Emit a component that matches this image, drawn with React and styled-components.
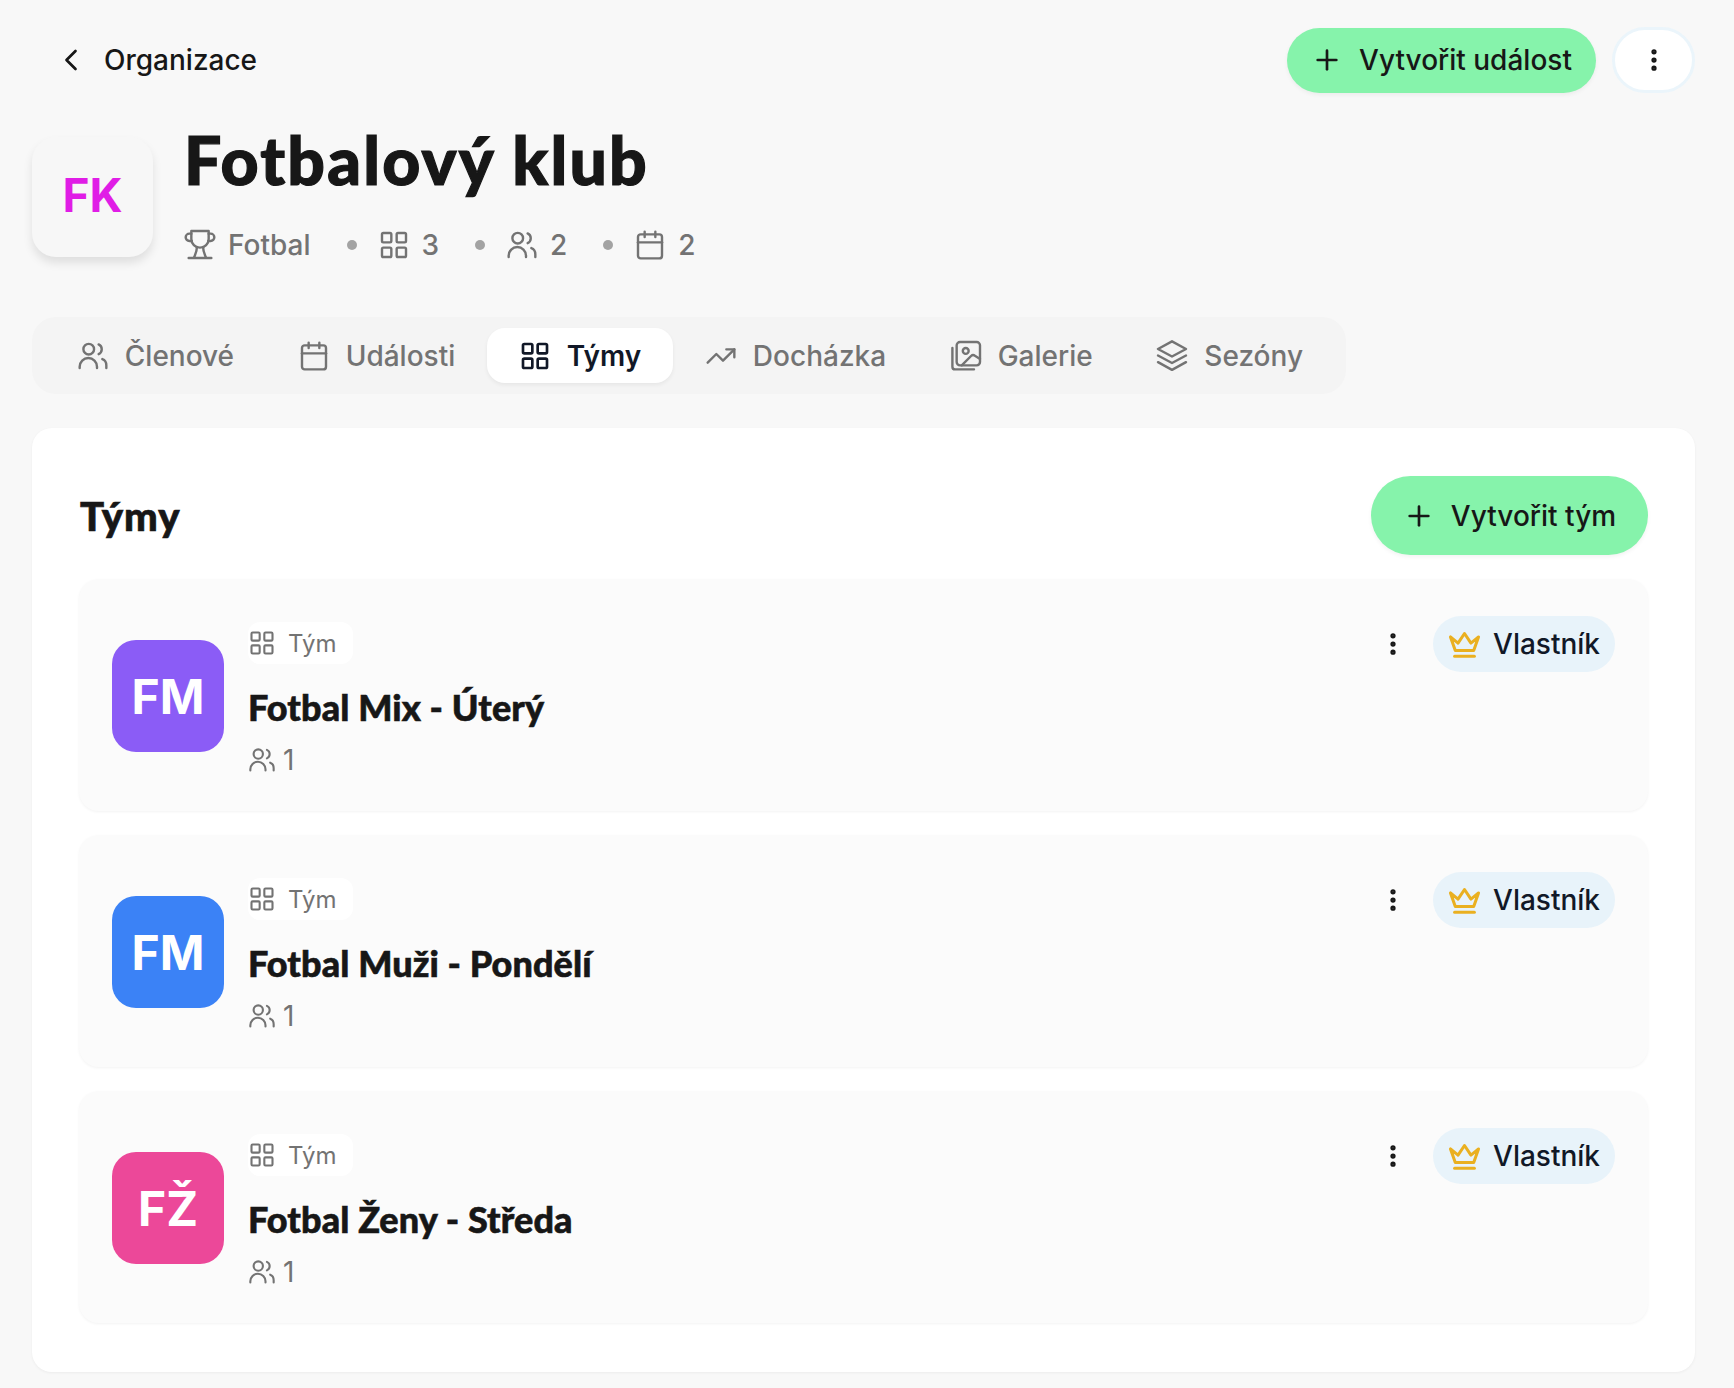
import React from "react";
import styled, { createGlobalStyle } from "styled-components";
import {
  ChevronLeft,
  Plus,
  EllipsisVertical,
  LayoutGrid,
  Calendar,
  TrendingUp,
} from "lucide-react";

const GlobalStyle = createGlobalStyle`
  * { box-sizing: border-box; }
  body {
    margin: 0;
    background: #f8f8f8;
    color: #171717;
    font-family: Inter, "Liberation Sans", sans-serif;
  }
`;

const displayFont = `Lato, "Liberation Sans", sans-serif`;

// icons lucide doesn't draw the same way as the reference
const Svg = ({ size = 32, strokeWidth = 1.8, color = "currentColor", children }) => (
  <svg
    width={size}
    height={size}
    viewBox="0 0 24 24"
    fill="none"
    stroke={color}
    strokeWidth={strokeWidth}
    strokeLinecap="round"
    strokeLinejoin="round"
  >
    {children}
  </svg>
);

const PeopleIcon = (props) => (
  <Svg {...props}>
    <circle cx="8.8" cy="6.9" r="4" />
    <path d="M16.2 3.3a4 4 0 0 1 0 7.3" />
    <path d="M2 21v-1a6.5 6.5 0 0 1 13 0v1" />
    <path d="M19 14.3c2 .7 3 2.7 3 4.7v2" />
  </Svg>
);

const GalleryIcon = (props) => (
  <Svg {...props}>
    <rect x="5" y="1.5" width="17.5" height="17.5" rx="2.5" />
    <path d="M1.8 6v14a2 2 0 0 0 2 2H18" />
    <circle cx="11.8" cy="8.2" r="2.2" />
    <path d="M8.8 19l7-7c.8-.8 2-.9 2.9-.2l3.8 2.4" />
  </Svg>
);

const StackIcon = (props) => (
  <Svg {...props}>
    <path d="M12 1l10.5 5.7L12 12.4 1.5 6.7z" />
    <path d="M1.5 11.6L12 17.3l10.5-5.7" />
    <path d="M1.5 16.6L12 22.4l10.5-5.8" />
  </Svg>
);

const CupIcon = (props) => (
  <Svg {...props}>
    <path d="M5.5 1.5h13v6a6.5 6.5 0 0 1-13 0z" />
    <path d="M5.5 3.5H4a2.7 2.7 0 0 0 0 5.5h1.8" />
    <path d="M18.5 3.5H20a2.7 2.7 0 0 1 0 5.5h-1.8" />
    <path d="M9.7 13.5c0 3-1 5-2.2 8" />
    <path d="M14.3 13.5c0 3 1 5 2.2 8" />
    <path d="M3.5 21.7h17" />
  </Svg>
);

const OwnerCrown = (props) => (
  <Svg {...props}>
    <path d="M1.8 6.5l3.5 9.8h13.4l3.5-9.8-5.5 4.5L12 4 7.3 11z" />
    <path d="M4.8 20.6h14.4" />
  </Svg>
);

const Page = styled.div`
  padding: 27px 39px 16px 32px;
`;

const TopBar = styled.header`
  display: flex;
  justify-content: space-between;
  align-items: center;
  height: 66px;
`;

const BackLink = styled.a`
  display: flex;
  align-items: center;
  gap: 15px;
  margin-left: 21px;
  font-size: 28px;
  font-weight: 500;
  color: #171717;
`;

const TopActions = styled.div`
  display: flex;
  align-items: center;
  gap: 16px;
`;

const GreenButton = styled.button`
  display: flex;
  align-items: center;
  justify-content: center;
  gap: 16px;
  width: ${({ $width }) => $width}px;
  height: ${({ $height }) => $height}px;
  border: 0;
  border-radius: 999px;
  background: #86f3ab;
  box-shadow: 0 2px 4px rgba(0, 0, 0, 0.05);
  color: #171717;
  font-family: inherit;
  font-size: 28px;
  font-weight: 500;
`;

const MoreButton = styled.button`
  display: flex;
  align-items: center;
  justify-content: center;
  width: 83px;
  height: 66px;
  border: 3px solid #ebf5fb;
  border-radius: 999px;
  background: #fff;
  color: #171717;
`;

const ClubHeader = styled.section`
  display: flex;
  gap: 31px;
  margin-top: 44px;
  height: 128px;
`;

const ClubLogo = styled.div`
  display: flex;
  align-items: center;
  justify-content: center;
  flex: none;
  width: 121px;
  height: 120px;
  padding-bottom: 4px;
  border-radius: 24px;
  background: #f7f7f7;
  box-shadow: 0 6px 10px rgba(0, 0, 0, 0.1);
  color: #e01de6;
  font-size: 46px;
  font-weight: 700;
`;

const ClubInfo = styled.div`
  display: flex;
  flex-direction: column;
`;

const ClubTitle = styled.h1`
  margin: -18px 0 0;
  font-family: ${displayFont};
  font-size: 66px;
  font-weight: 900;
  line-height: 82px;
  letter-spacing: 2.2px;
  -webkit-text-stroke: 1.2px #171717;
  color: #171717;
`;

const MetaRow = styled.div`
  display: flex;
  align-items: center;
  margin-top: 27px;
  color: #737373;
  font-size: 28px;
  font-weight: 500;
`;

const MetaItem = styled.span`
  display: flex;
  align-items: center;
  gap: 12px;
`;

const MetaDot = styled.span`
  width: 10px;
  height: 10px;
  margin: 0 21px 0 36px;
  border-radius: 50%;
  background: #a3a3a3;
`;

const TabBar = styled.nav`
  display: inline-flex;
  margin-top: 52px;
  padding: 11px 11px 11px 13px;
  height: 77px;
  border-radius: 24px;
  background: #f4f4f4;
`;

const Tab = styled.a`
  display: flex;
  align-items: center;
  gap: 16px;
  padding: 0 31.8px;
  border-radius: 18px;
  font-size: 28px;
  font-weight: ${({ $active }) => ($active ? 600 : 500)};
  color: ${({ $active }) => ($active ? "#111827" : "#737373")};
  background: ${({ $active }) => ($active ? "#fff" : "transparent")};
  box-shadow: ${({ $active }) => ($active ? "0 2px 4px rgba(0, 0, 0, 0.06)" : "none")};
`;

const Panel = styled.main`
  margin-top: 34px;
  padding: 48px 47px 49px 47px;
  border-radius: 20px;
  background: #fff;
  box-shadow: 0 1px 3px rgba(0, 0, 0, 0.05);
`;

const PanelHead = styled.div`
  display: flex;
  justify-content: space-between;
  align-items: center;
  margin-bottom: 24px;
`;

const PanelTitle = styled.h2`
  margin: 0 0 0 1px;
  font-family: ${displayFont};
  font-size: 40px;
  font-weight: 900;
  letter-spacing: 1px;
  -webkit-text-stroke: 0.7px #171717;
  color: #171717;
`;

const TeamList = styled.div`
  display: flex;
  flex-direction: column;
  gap: 24px;
`;

const TeamCard = styled.article`
  display: flex;
  justify-content: space-between;
  height: 232px;
  padding: 37px 33px 0;
  border-radius: 20px;
  background: #fbfbfb;
  box-shadow: 0 1px 3px rgba(0, 0, 0, 0.05);
`;

const TeamMain = styled.div`
  display: flex;
  gap: 24px;
`;

const TeamAvatar = styled.div`
  display: flex;
  align-items: center;
  justify-content: center;
  flex: none;
  width: 112px;
  height: 112px;
  margin-top: 24px;
  border-radius: 24px;
  background: ${({ $color }) => $color};
  color: #fff;
  font-size: 48px;
  font-weight: 700;
`;

const TeamText = styled.div`
  display: flex;
  flex-direction: column;
  margin-top: 6px;
`;

const TypeBadge = styled.span`
  display: flex;
  align-items: center;
  gap: 12px;
  align-self: flex-start;
  height: 42px;
  padding: 0 16px 0 0;
  border-radius: 12px;
  background: #fff;
  color: #737373;
  font-size: 24px;
`;

const TeamName = styled.h3`
  margin: 21px 0 0;
  font-family: ${displayFont};
  font-size: 36px;
  font-weight: 900;
  line-height: 44px;
  letter-spacing: 0.1px;
  -webkit-text-stroke: 0.6px #171717;
  color: #171717;
`;

const MemberCount = styled.div`
  display: flex;
  align-items: center;
  gap: 7px;
  margin-top: 14px;
  color: #737373;
  font-size: 28px;
`;

const TeamActions = styled.div`
  display: flex;
  align-items: flex-start;
  gap: 26px;
`;

const DotsWrap = styled.span`
  display: flex;
  align-items: center;
  height: 56px;
  color: #171717;
`;

const RolePill = styled.span`
  display: flex;
  align-items: center;
  gap: 12px;
  height: 56px;
  padding: 0 15px;
  border-radius: 999px;
  background: #e8f3fa;
  color: #111827;
  font-size: 28px;
  font-weight: 500;
`;

const tabs = [
  { label: "Členové", Icon: PeopleIcon },
  { label: "Události", Icon: Calendar },
  { label: "Týmy", Icon: LayoutGrid, active: true },
  { label: "Docházka", Icon: TrendingUp },
  { label: "Galerie", Icon: GalleryIcon },
  { label: "Sezóny", Icon: StackIcon },
];

const teams = [
  { initials: "FM", name: "Fotbal Mix - Úterý", color: "#8b5cf6" },
  { initials: "FM", name: "Fotbal Muži - Pondělí", color: "#3b82f6" },
  { initials: "FŽ", name: "Fotbal Ženy - Středa", color: "#ec4899" },
];

const App = () => {
  return (
    <Page>
      <GlobalStyle />
      <TopBar>
        <BackLink>
          <ChevronLeft size={36} strokeWidth={1.8} />
          Organizace
        </BackLink>
        <TopActions>
          <GreenButton $width={309} $height={65}>
            <Plus size={32} strokeWidth={2} />
            Vytvořit událost
          </GreenButton>
          <MoreButton>
            <EllipsisVertical size={28} strokeWidth={2.5} />
          </MoreButton>
        </TopActions>
      </TopBar>

      <ClubHeader>
        <ClubLogo>FK</ClubLogo>
        <ClubInfo>
          <ClubTitle>Fotbalový klub</ClubTitle>
          <MetaRow>
            <MetaItem>
              <CupIcon size={32} />
              Fotbal
            </MetaItem>
            <MetaDot />
            <MetaItem>
              <LayoutGrid size={32} strokeWidth={1.8} />3
            </MetaItem>
            <MetaDot />
            <MetaItem>
              <PeopleIcon size={32} />2
            </MetaItem>
            <MetaDot />
            <MetaItem>
              <Calendar size={32} strokeWidth={1.8} />2
            </MetaItem>
          </MetaRow>
        </ClubInfo>
      </ClubHeader>

      <TabBar>
        {tabs.map(({ label, Icon, active }) => (
          <Tab key={label} $active={active}>
            <Icon size={32} strokeWidth={active ? 2 : 1.8} />
            {label}
          </Tab>
        ))}
      </TabBar>

      <Panel>
        <PanelHead>
          <PanelTitle>Týmy</PanelTitle>
          <GreenButton $width={277} $height={79}>
            <Plus size={32} strokeWidth={2} />
            Vytvořit tým
          </GreenButton>
        </PanelHead>
        <TeamList>
          {teams.map((team) => (
            <TeamCard key={team.name}>
              <TeamMain>
                <TeamAvatar $color={team.color}>{team.initials}</TeamAvatar>
                <TeamText>
                  <TypeBadge>
                    <LayoutGrid size={28} strokeWidth={1.8} />
                    Tým
                  </TypeBadge>
                  <TeamName>{team.name}</TeamName>
                  <MemberCount>
                    <PeopleIcon size={28} />1
                  </MemberCount>
                </TeamText>
              </TeamMain>
              <TeamActions>
                <DotsWrap>
                  <EllipsisVertical size={28} strokeWidth={2.5} />
                </DotsWrap>
                <RolePill>
                  <OwnerCrown size={33} strokeWidth={2.2} color="#eab020" />
                  Vlastník
                </RolePill>
              </TeamActions>
            </TeamCard>
          ))}
        </TeamList>
      </Panel>
    </Page>
  );
};

export default App;
